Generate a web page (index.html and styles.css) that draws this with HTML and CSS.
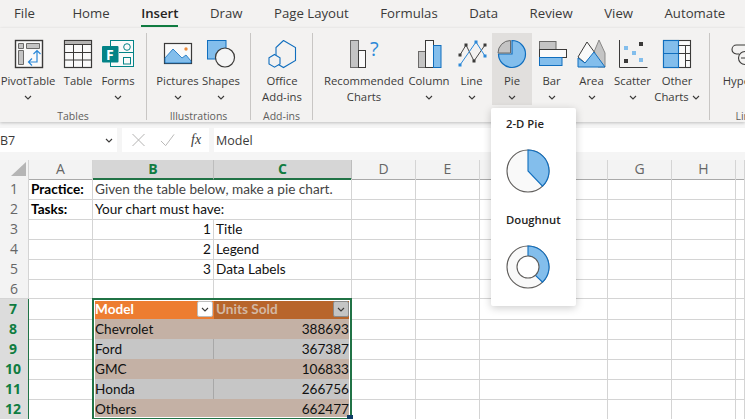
FILE: index.html
```html
<html>
<head>
<title>Book1 - Excel</title>
<link rel="stylesheet" href="styles.css">
</head>

<body>
	<div class="tabs">
		<span class="tab tab-file">File</span>
		<span class="tab">Home</span>
		<span class="tab active">Insert</span>
		<span class="tab">Draw</span>
		<span class="tab">Page Layout</span>
		<span class="tab">Formulas</span>
		<span class="tab">Data</span>
		<span class="tab">Review</span>
		<span class="tab">View</span>
		<span class="tab">Automate</span>
	</div>

	<div class="ribbon">
		<div class="group g-tables">
			<div class="tools">
				<div class="tool w-pivot">
					<svg class="icon" viewBox="0 0 32 32"><rect x="3.500" y="2.500" width="27" height="27" fill="#fafafa" stroke="#3b3a39" stroke-width="1.400"/><path d="M6.500 5.500h5v5h-5zM14.500 5.500h13v5h-13zM6.500 12.500h5v14h-5z" fill="#c4c4c4" stroke="#6b6a69"/><path d="M25 13v11h-8M21.500 16l3.500-3.500 3.500 3.500M20 20.500l-3.500 3.500 3.500 3.500" fill="none" stroke="#2b88d8" stroke-width="1.200"/></svg>
					<span class="label">PivotTable</span>
					<svg class="chev" viewBox="0 0 8 5"><path d="M1 1l3 3 3-3"/></svg>
				</div>
				<div class="tool w-table">
					<svg class="icon" viewBox="0 0 32 32"><rect x="2.500" y="2.500" width="27" height="27" fill="#fafafa" stroke="#3b3a39" stroke-width="1.200"/><rect x="2.500" y="2.500" width="27" height="4" fill="#b5b4b3" stroke="#3b3a39" stroke-width="1"/><path d="M11.500 6.500v23M20.500 6.500v23M2.500 14.500h27M2.500 22h27" fill="none" stroke="#3b3a39"/></svg>
					<span class="label">Table</span>
				</div>
				<div class="tool w-forms">
					<svg class="icon" viewBox="0 0 32 32"><rect x="8.500" y="2.500" width="23" height="26" fill="#fafafa" stroke="#038387"/><path d="M17 14.500h14.500" stroke="#038387" fill="none"/><circle cx="25" cy="9" r="3.300" fill="#fafafa" stroke="#038387"/><rect x="21.500" y="19.500" width="7" height="6.500" fill="#fafafa" stroke="#038387"/><rect x="0" y="8" width="16.500" height="16.500" rx="1" fill="#038387"/><text x="4" y="21.500" class="forms-f">F</text></svg>
					<span class="label">Forms</span>
					<svg class="chev" viewBox="0 0 8 5"><path d="M1 1l3 3 3-3"/></svg>
				</div>
			</div>
			<div class="group-name">Tables</div>
		</div>

		<div class="group g-illus">
			<div class="tools">
				<div class="tool w-pictures">
					<svg class="icon" viewBox="0 0 32 32"><rect x="2.500" y="5.500" width="27" height="20" fill="#fafafa" stroke="#3b3a39" stroke-width="1.200"/><path d="M3 25V20l8-9 9 9 4-3 5 6v2z" fill="#83beec" stroke="#106ebe" stroke-width=".8"/><circle cx="24" cy="11" r="1.700" fill="#ea8a3c"/></svg>
					<span class="label">Pictures</span>
					<svg class="chev" viewBox="0 0 8 5"><path d="M1 1l3 3 3-3"/></svg>
				</div>
				<div class="tool w-shapes">
					<svg class="icon" viewBox="0 0 32 32"><rect x="2.500" y="2.500" width="18.500" height="18.500" fill="#83beec" stroke="#106ebe"/><circle cx="20" cy="19.500" r="9.500" fill="#f5f5f5" stroke="#3b3a39" stroke-width="1.200"/></svg>
					<span class="label">Shapes</span>
					<svg class="chev" viewBox="0 0 8 5"><path d="M1 1l3 3 3-3"/></svg>
				</div>
			</div>
			<div class="group-name">Illustrations</div>
		</div>

		<div class="group g-addins">
			<div class="tools">
				<div class="tool w-office">
					<svg class="icon" viewBox="0 0 32 32"><path d="M17.500 2.500l12 7v13l-12 7-6-3.500M10 17v-7.500l7.500-7" fill="none" stroke="#106ebe" stroke-width="1.100"/><path d="M8.500 16.500l5.500 3.200v6.300l-5.500 3.200-5.500-3.200v-6.300z" fill="#f3f2f1" stroke="#106ebe" stroke-width="1.100"/></svg>
					<span class="label">Office<br>Add-ins</span>
				</div>
			</div>
			<div class="group-name">Add-ins</div>
		</div>

		<div class="group g-charts">
			<div class="tools">
				<div class="tool w-recommended">
					<svg class="icon" viewBox="0 0 32 32"><rect x="2.500" y="2.500" width="8" height="27" fill="#c4c4c4" stroke="#6b6a69"/><rect x="10.500" y="12.500" width="7" height="17" fill="#fafafa" stroke="#3b3a39"/><text x="22" y="18" class="question">?</text></svg>
					<span class="label">Recommended<br>Charts</span>
				</div>
				<div class="tool w-column">
					<svg class="icon" viewBox="0 0 32 32"><rect x="5.500" y="13.500" width="7" height="16" fill="#c4c4c4" stroke="#6b6a69"/><rect x="12.500" y="2.500" width="8" height="27" fill="#fafafa" stroke="#3b3a39"/><rect x="20.500" y="7.500" width="7.500" height="22" fill="#83beec" stroke="#106ebe"/></svg>
					<span class="label">Column</span>
					<svg class="chev" viewBox="0 0 8 5"><path d="M1 1l3 3 3-3"/></svg>
				</div>
				<div class="tool w-line">
					<svg class="icon" viewBox="0 0 32 32"><path d="M4 17l6-10 8 16 11-16" fill="none" stroke="#4a4948"/><path d="M4 27L20 4l9 14" fill="none" stroke="#2b88d8"/><path d="M2.500 15.500h3v3h-3zM8.500 5.500h3v3h-3zM16.500 21.500h3v3h-3zM27.500 5.500h3v3h-3z" fill="#3b3a39"/><path d="M2.500 25.500h3v3h-3zM18.500 2.500h3v3h-3zM27.500 16.500h3v3h-3z" fill="#2b88d8"/></svg>
					<span class="label">Line</span>
					<svg class="chev" viewBox="0 0 8 5"><path d="M1 1l3 3 3-3"/></svg>
				</div>
				<div class="tool w-pie on">
					<svg class="icon" viewBox="0 0 32 32"><path d="M16 2.500a13.500 13.500 0 1 1-13.500 13.500H16z" fill="#83beec" stroke="#106ebe" stroke-width="1.200"/><path d="M14.500 2.500v12.500H2a12.500 12.500 0 0 1 12.500-12.500z" fill="#c4c4c4" stroke="#6b6a69"/></svg>
					<span class="label">Pie</span>
					<svg class="chev" viewBox="0 0 8 5"><path d="M1 1l3 3 3-3"/></svg>
				</div>
				<div class="tool w-bar">
					<svg class="icon" viewBox="0 0 32 32"><rect x="3.500" y="3.500" width="16.500" height="8" fill="#c4c4c4" stroke="#6b6a69"/><rect x="3.500" y="11.500" width="27" height="8" fill="#fafafa" stroke="#3b3a39"/><rect x="3.500" y="19.500" width="22.500" height="8" fill="#83beec" stroke="#106ebe"/></svg>
					<span class="label">Bar</span>
					<svg class="chev" viewBox="0 0 8 5"><path d="M1 1l3 3 3-3"/></svg>
				</div>
				<div class="tool w-area">
					<svg class="icon" viewBox="0 0 32 32"><path d="M18 14l5-12 6 13v14H22z" fill="#c4c4c4" stroke="#8a8988"/><path d="M2 19l9-15 8 11-10 10z" fill="#fafafa" stroke="#3b3a39"/><path d="M2 20l7 5 9-11 11 15H2z" fill="#83beec" stroke="#106ebe"/></svg>
					<span class="label">Area</span>
					<svg class="chev" viewBox="0 0 8 5"><path d="M1 1l3 3 3-3"/></svg>
				</div>
				<div class="tool w-scatter">
					<svg class="icon" viewBox="0 0 32 32"><path d="M2.500 2v27.500H30.500" fill="none" stroke="#3b3a39"/><path d="M7 8h4v4H7zM15 13h4v4h-4zM22 20h4v4h-4z" fill="#83beec"/><path d="M22 4h4v4h-4zM7 21h4v4H7z" fill="#3b3a39"/></svg>
					<span class="label">Scatter</span>
					<svg class="chev" viewBox="0 0 8 5"><path d="M1 1l3 3 3-3"/></svg>
				</div>
				<div class="tool w-other">
					<svg class="icon" viewBox="0 0 32 32"><rect x="2.500" y="2.500" width="27" height="27" fill="#fafafa" stroke="#3b3a39" stroke-width="1.100"/><rect x="2.500" y="2.500" width="15" height="27" fill="#83beec" stroke="#106ebe" stroke-width="1.100"/><path d="M2.500 15.500h15" stroke="#106ebe" fill="none"/><path d="M17.500 7.500h12M24.500 7.500v22M17.500 15.500h12M24.500 22.500h5" fill="none" stroke="#3b3a39"/></svg>
					<span class="label">Other<br>Charts<svg class="chev chev-inline" viewBox="0 0 8 5"><path d="M1 1l3 3 3-3"/></svg></span>
				</div>
			</div>
		</div>

		<div class="group g-links">
			<div class="tools">
				<div class="tool w-hyper">
					<svg class="icon" viewBox="0 0 32 32"><path d="M7 16H4.500a4.500 4.500 0 0 1 0-9h14" fill="none" stroke="#3b3a39" stroke-width="1.100"/><circle cx="13" cy="20" r="6.500" fill="#f3f2f1" stroke="#3b3a39" stroke-width="1.100"/><path d="M9 20h9" stroke="#3b3a39" fill="none"/></svg>
					<span class="label">Hyperlink</span>
				</div>
			</div>
			<div class="group-name">Links</div>
		</div>
	</div>

	<div class="formula-bar">
		<div class="name-box"><span>B7</span><svg class="chev" viewBox="0 0 8 5"><path d="M1 1l3 3 3-3"/></svg></div>
		<div class="fx-box">
			<svg class="fx-mark" viewBox="0 0 14 14"><path d="M1 1l12 12M13 1L1 13"/></svg>
			<svg class="fx-mark" viewBox="0 0 16 14"><path d="M1 8l5 5L15 1"/></svg>
			<span class="fx">fx</span>
		</div>
		<div class="formula-input">Model</div>
	</div>

	<div class="sheet">
		<div class="row head-row">
			<div class="corner"><svg viewBox="0 0 16 16"><path d="M16 1v14H1z" fill="#b5b5b5"/></svg></div>
			<div class="col-h">A</div><div class="col-h sel">B</div><div class="col-h sel">C</div><div class="col-h">D</div><div class="col-h">E</div><div class="col-h">F</div><div class="col-h">G</div><div class="col-h">H</div><div class="col-h"></div>
		</div>
		<div class="row">
			<div class="row-h">1</div><div class="cell bold">Practice:</div><div class="cell span2 grey">Given the table below, make a pie chart.</div><div class="cell"></div><div class="cell"></div><div class="cell"></div><div class="cell"></div><div class="cell"></div><div class="cell"></div>
		</div>
		<div class="row">
			<div class="row-h">2</div><div class="cell bold">Tasks:</div><div class="cell span2">Your chart must have:</div><div class="cell"></div><div class="cell"></div><div class="cell"></div><div class="cell"></div><div class="cell"></div><div class="cell"></div>
		</div>
		<div class="row">
			<div class="row-h">3</div><div class="cell"></div><div class="cell num">1</div><div class="cell">Title</div><div class="cell"></div><div class="cell"></div><div class="cell"></div><div class="cell"></div><div class="cell"></div><div class="cell"></div>
		</div>
		<div class="row">
			<div class="row-h">4</div><div class="cell"></div><div class="cell num">2</div><div class="cell">Legend</div><div class="cell"></div><div class="cell"></div><div class="cell"></div><div class="cell"></div><div class="cell"></div><div class="cell"></div>
		</div>
		<div class="row">
			<div class="row-h">5</div><div class="cell"></div><div class="cell num">3</div><div class="cell">Data Labels</div><div class="cell"></div><div class="cell"></div><div class="cell"></div><div class="cell"></div><div class="cell"></div><div class="cell"></div>
		</div>
		<div class="row">
			<div class="row-h">6</div><div class="cell"></div><div class="cell"></div><div class="cell"></div><div class="cell"></div><div class="cell"></div><div class="cell"></div><div class="cell"></div><div class="cell"></div><div class="cell"></div>
		</div>
		<div class="row">
			<div class="row-h sel">7</div><div class="cell"></div><div class="cell th th-b">Model<span class="filter"><svg class="chev" viewBox="0 0 8 5"><path d="M1 1l3 3 3-3"/></svg></span></div><div class="cell th th-c">Units Sold<span class="filter filter-c"><svg class="chev" viewBox="0 0 8 5"><path d="M1 1l3 3 3-3"/></svg></span></div><div class="cell"></div><div class="cell"></div><div class="cell"></div><div class="cell"></div><div class="cell"></div><div class="cell"></div>
		</div>
		<div class="row">
			<div class="row-h sel">8</div><div class="cell"></div><div class="cell tan">Chevrolet</div><div class="cell tan num">388693</div><div class="cell"></div><div class="cell"></div><div class="cell"></div><div class="cell"></div><div class="cell"></div><div class="cell"></div>
		</div>
		<div class="row">
			<div class="row-h sel">9</div><div class="cell"></div><div class="cell band">Ford</div><div class="cell band num">367387</div><div class="cell"></div><div class="cell"></div><div class="cell"></div><div class="cell"></div><div class="cell"></div><div class="cell"></div>
		</div>
		<div class="row">
			<div class="row-h sel">10</div><div class="cell"></div><div class="cell tan">GMC</div><div class="cell tan num">106833</div><div class="cell"></div><div class="cell"></div><div class="cell"></div><div class="cell"></div><div class="cell"></div><div class="cell"></div>
		</div>
		<div class="row">
			<div class="row-h sel">11</div><div class="cell"></div><div class="cell band">Honda</div><div class="cell band num">266756</div><div class="cell"></div><div class="cell"></div><div class="cell"></div><div class="cell"></div><div class="cell"></div><div class="cell"></div>
		</div>
		<div class="row">
			<div class="row-h sel">12</div><div class="cell"></div><div class="cell tan">Others</div><div class="cell tan num">662477</div><div class="cell"></div><div class="cell"></div><div class="cell"></div><div class="cell"></div><div class="cell"></div><div class="cell"></div>
		</div>
		<div class="row-edge"></div>
		<div class="selection"><span class="handle"></span></div>
	</div>

	<div class="pie-menu">
		<div class="menu-title">2-D Pie</div>
		<svg class="menu-icon" viewBox="0 0 44 44"><circle cx="22" cy="22" r="21" fill="#f9f9f9" stroke="#605e5c" stroke-width="1.100"/><path d="M22 1a21 21 0 0 1 14.500 36.200L22 22z" fill="#83beec" stroke="#106ebe" stroke-width="1.100"/></svg>
		<div class="menu-title">Doughnut</div>
		<svg class="menu-icon" viewBox="0 0 44 44"><circle cx="22" cy="22" r="21" fill="#f9f9f9" stroke="#605e5c" stroke-width="1.100"/><path d="M22 1a21 21 0 0 1 14.500 36.200L29 30A11 11 0 0 0 22 11z" fill="#83beec" stroke="#106ebe" stroke-width="1.100"/><circle cx="22" cy="22" r="11" fill="#fff" stroke="#605e5c" stroke-width="1.100"/></svg>
	</div>
</body>
</html>
```

FILE: styles.css
```css
html, body {
	height: 100%;
}

body {
	margin: 0px;
	background: #fff;
	font-family: "Open Sans", "Noto Sans", sans-serif;
	color: #3b3a39;
	overflow: hidden;
	position: relative;
}

/* tabs */
.tabs {
	display: flex;
	gap: 31.500px;
	height: 28px;
	padding-left: 14px;
	background: #f3f2f1;
	font-size: 13.200px;
	box-sizing: border-box;
}

.tab {
	line-height: 27px;
	height: 28px;
	box-sizing: border-box;
	white-space: nowrap;
}

.tab-file {
	margin-right: 6px;
}

.tab.active {
	font-weight: 600;
	color: #252423;
	border-bottom: 2px solid #107c41;
	height: 27px;
}

/* ribbon */
.ribbon {
	display: flex;
	height: 94px;
	padding-top: 5px;
	box-sizing: border-box;
	background: #f3f2f1;
	box-shadow: 0 1px 3px rgba(0, 0, 0, 0.22);
	position: relative;
	overflow: hidden;
}

.group {
	height: 87px;
	position: relative;
	box-sizing: border-box;
	border-right: 1px solid #c8c6c4;
	flex: none;
}

.g-tables { width: 147px; }
.g-illus { width: 104px; padding-left: 8px; }
.g-addins { width: 62px; padding-left: 7px; }
.g-charts { width: 397px; padding-left: 10px; }
.g-links { width: 76px; border-right: 0; padding-left: 10px; }

.tools {
	display: flex;
}

.tool {
	height: 72px;
	padding-top: 5px;
	box-sizing: border-box;
	display: flex;
	flex-direction: column;
	align-items: center;
	flex: none;
	font-size: 11.300px;
	line-height: 16px;
	text-align: center;
}

.tool.on {
	background: #e1dfdd;
}

.w-pivot { width: 56px; }
.w-table { width: 44px; }
.w-forms { width: 36px; }
.w-pictures { width: 45px; }
.w-shapes { width: 42px; }
.w-office { width: 48px; }
.w-recommended { width: 82px; margin-right: 2px; }
.w-column { width: 44px; }
.w-line { width: 41px; }
.w-pie { width: 40px; }
.w-bar { width: 39px; }
.w-area { width: 41px; }
.w-scatter { width: 41px; }
.w-other { width: 48px; }
.w-hyper { width: 56px; }

.icon {
	width: 32px;
	height: 32px;
	flex: none;
	margin-bottom: 3px;
	overflow: visible;
}

.label {
	white-space: nowrap;
}

.chev {
	width: 8px;
	height: 5px;
	margin-top: 6px;
	flex: none;
}

.chev path {
	fill: none;
	stroke: #3b3a39;
	stroke-width: 1.100;
}

.chev-inline {
	margin: 0 0 1px 3px;
}

.group-name {
	position: absolute;
	left: 0;
	right: 0;
	top: 76px;
	font-size: 10.500px;
	line-height: 14px;
	text-align: center;
	color: #605e5c;
	white-space: nowrap;
}

.forms-f {
	font-size: 14px;
	font-weight: 700;
	fill: #fff;
	font-family: "Open Sans", sans-serif;
}

.question {
	font-size: 20px;
	fill: #2b88d8;
	font-family: "Open Sans", sans-serif;
}

/* formula bar */
.formula-bar {
	display: flex;
	height: 38px;
	padding: 6px 0 8px;
	box-sizing: border-box;
	background: #f5f5f5;
}

.name-box, .fx-box, .formula-input {
	background: #fff;
	height: 24px;
	box-sizing: border-box;
	display: flex;
	align-items: center;
}

.name-box {
	width: 117px;
	margin-right: 5px;
	justify-content: space-between;
	padding-right: 4px;
	font-size: 12.500px;
}

.name-box .chev {
	margin-top: 0;
}

.fx-box {
	width: 87px;
	margin-right: 5px;
	padding-left: 9px;
	gap: 14px;
}

.fx-mark {
	width: 15px;
	height: 14px;
	flex: none;
}

.fx-mark path {
	fill: none;
	stroke: #b5b4b3;
	stroke-width: 1;
}

.fx {
	font-family: "Liberation Serif", serif;
	font-style: italic;
	font-size: 14px;
	color: #3b3a39;
	margin-left: 2px;
}

.formula-input {
	flex: 1;
	padding-left: 2px;
	font-size: 12.500px;
}

/* sheet */
.sheet {
	position: relative;
	font-family: Lato, "Open Sans", sans-serif;
	font-size: 13.600px;
	color: #111;
}

.row {
	display: grid;
	grid-template-columns: 29px 64px 121px 138px 64px 64px 128px 64px 64px 9px;
	height: 20px;
}

.head-row {
	height: 19px;
}

.corner {
	background: #f3f3f3;
	border-right: 1px solid #d4d4d4;
	border-bottom: 1px solid #a9a9a9;
}

.corner svg {
	width: 16px;
	height: 16px;
	display: block;
	margin: 1px 0 0 10px;
}

.col-h {
	background: #f3f3f3;
	border-right: 1px solid #d4d4d4;
	border-bottom: 1px solid #a9a9a9;
	box-sizing: border-box;
	color: #666;
	text-align: center;
	line-height: 18px;
	font-size: 14px;
	font-family: "Open Sans", sans-serif;
}

.col-h.sel {
	background: #d6d6d6;
	color: #107c41;
	font-weight: 700;
	border-bottom: 2px solid #217346;
	border-right-color: #bdbdbd;
}

.row-h {
	background: #f3f3f3;
	border-right: 1px solid #d4d4d4;
	border-bottom: 1px solid #d4d4d4;
	box-sizing: border-box;
	color: #666;
	text-align: center;
	line-height: 19px;
	font-size: 14px;
	font-family: "Open Sans", sans-serif;
}

.row-h.sel {
	background: #dcdcdc;
	color: #107c41;
	font-weight: 700;
	border-bottom-color: #c4c4c4;
	padding-right: 2px;
}

.cell {
	border-right: 1px solid #d4d4d4;
	border-bottom: 1px solid #d4d4d4;
	box-sizing: border-box;
	padding: 1px 2px 0;
	line-height: 19px;
	white-space: nowrap;
	position: relative;
}

.bold { font-weight: 700; color: #000; }
.grey { color: #444; }
.span2 { grid-column: span 2; }
.num { text-align: right; }

.th {
	font-weight: 700;
	color: #fff;
}

.th-b { background: #ed7d31; border-right: 0; border-bottom-color: #ed7d31; }
.th-c { background: #b8652b; color: #d3b8a4; border-bottom-color: #b8652b; }

.tan {
	background: #c4b1a5;
	border-right-color: #c4b1a5;
	border-bottom-color: #cf8a5c;
}

.band {
	background: #c6c6c6;
	border-right-color: #a8a8a8;
	border-bottom-color: #cf8a5c;
}

.tan.num, .band.num {
	border-right-color: #d4d4d4;
}

.filter {
	position: absolute;
	right: 1px;
	top: 2px;
	width: 16px;
	height: 16px;
	box-sizing: border-box;
	background: #fff;
	border: 1px solid #bdbdbd;
	border-radius: 2px;
	display: flex;
	align-items: center;
	justify-content: center;
}

.filter-c {
	background: #c4c4c4;
	border-color: #8a8a8a;
	right: 2px;
}

.filter .chev {
	margin-top: 0;
}

.row-edge {
	position: absolute;
	left: 28px;
	top: 139px;
	width: 1px;
	height: 120px;
	background: #217346;
}

.selection {
	position: absolute;
	left: 92px;
	top: 138px;
	width: 260px;
	height: 122px;
	box-sizing: border-box;
	border: 2px solid #217346;
	box-shadow: inset 0 0 0 1px #fff;
}

.handle {
	position: absolute;
	right: -3px;
	bottom: -3px;
	width: 6px;
	height: 6px;
	background: #0f3d66;
}

/* popup */
.pie-menu {
	position: absolute;
	left: 491px;
	top: 108px;
	width: 85px;
	height: 198px;
	padding: 8px 0 0 15px;
	box-sizing: border-box;
	background: #fff;
	border-radius: 2px;
	box-shadow: 0 2px 8px rgba(0, 0, 0, 0.2);
}

.menu-title {
	font-size: 11.300px;
	font-weight: 600;
	line-height: 16px;
	color: #252423;
	white-space: nowrap;
}

.menu-icon {
	display: block;
	width: 44px;
	height: 44px;
	margin: 17px 0 19px;
}
```
